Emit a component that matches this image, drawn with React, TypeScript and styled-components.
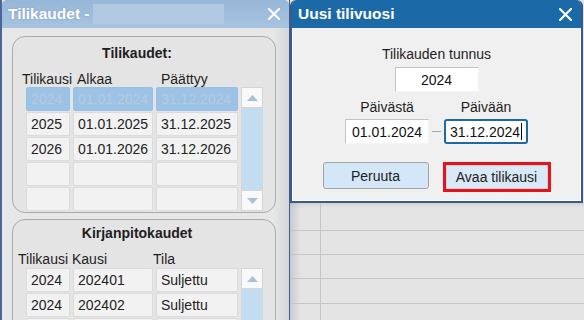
import styled, { createGlobalStyle } from 'styled-components';

const GlobalStyle = createGlobalStyle`
  html, body {
    margin: 0;
    padding: 0;
  }

  body {
    width: 584px;
    height: 320px;
    overflow: hidden;
    background: #e4e4e4;
    font-family: 'Liberation Sans', Arial, sans-serif;
    font-size: 14px;
    color: #1e1e1e;
  }
`;

const Desktop = styled.div`
  display: flex;
  width: 584px;
  height: 320px;
  overflow: hidden;
`;

const Window = styled.section`
  flex: none;
  width: 290px;
  display: flex;
  flex-direction: column;
  box-sizing: border-box;
  border-left: 2px solid #4a6696;
  border-right: 1px solid #3e5c8d;
  overflow: hidden;
`;

const TitleBar = styled.header<{ $active?: boolean }>`
  flex: none;
  height: 28px;
  display: flex;
  align-items: center;
  gap: 3px;
  padding: 0 9px 0 6px;
  box-sizing: border-box;
  border-radius: 5px 5px 0 0;
  background: ${({ $active }) => ($active ? '#1b6aa7' : 'linear-gradient(#97b7d8, #a7c3e0)')};
  color: #fff;
  font-size: 15.5px;
  font-weight: bold;
  text-shadow: ${({ $active }) => ($active ? 'none' : '0 0 2px rgba(90, 120, 160, .5)')};
`;

const Redacted = styled.span`
  width: 131px;
  height: 20px;
  background: #b1c9e2;
`;

const Close = styled.svg`
  margin-left: auto;
  flex: none;
`;

const WindowBody = styled.div`
  flex: 1;
  display: flex;
  flex-direction: column;
  gap: 6px;
  padding: 8px 0 0 10px;
  background: linear-gradient(to right, #e7e7e7 calc(100% - 16px), #d4d6da);
`;

const Panel = styled.div<{ $top: number }>`
  flex: none;
  width: 264px;
  box-sizing: border-box;
  padding: ${({ $top }) => $top}px 0 1px;
  border: 1px solid #a9a9a9;
  border-radius: 13px;
  background: #e4e4e4;
`;

const Heading = styled.div`
  padding-right: 14px;
  text-align: center;
  font-weight: bold;
  line-height: 16px;
`;

const HeaderRow = styled.div<{ $cols: string; $indent: number; $after: number }>`
  display: grid;
  grid-template-columns: ${({ $cols }) => $cols};
  padding-left: ${({ $indent }) => $indent}px;
  margin: 10px 0 ${({ $after }) => $after}px;
  line-height: 16px;
`;

const Table = styled.div<{ $rows: number }>`
  display: grid;
  grid-template-columns: 44px 80px 82px 22px;
  grid-template-rows: repeat(${({ $rows }) => $rows}, 24px);
  column-gap: 3px;
  row-gap: 1px;
  padding-left: 13px;
`;

const Cell = styled.div<{ $selected?: boolean }>`
  box-sizing: border-box;
  padding-left: 4px;
  line-height: 22px;
  white-space: nowrap;
  border: 1px solid ${({ $selected }) => ($selected ? '#98c0e2' : '#dcdcdc')};
  border-radius: 2px;
  background: ${({ $selected }) => ($selected ? '#9cc3e5' : '#f2f2f2')};
  color: ${({ $selected }) => ($selected ? '#b6cadd' : '#222')};
`;

const Scrollbar = styled.div`
  grid-column: 4;
  grid-row: 1 / -1;
  display: flex;
  flex-direction: column;
`;

const ScrollButton = styled.div`
  flex: none;
  height: 21px;
  display: flex;
  align-items: center;
  justify-content: center;
  box-sizing: border-box;
  border: 1px solid #d6d6d6;
  background: #f9f9f9;
`;

const Track = styled.div`
  flex: 1;
  border-left: 1px solid #cfd6dc;
  border-right: 1px solid #cfd6dc;
  background: #c4dcef;
`;

const RightSide = styled.div`
  flex: 1;
  display: flex;
  flex-direction: column;
`;

const Dialog = styled.section`
  flex: none;
  height: 203px;
  margin-right: 1px;
  display: flex;
  flex-direction: column;
  box-sizing: border-box;
  border: 2px solid #3a5a8c;
  border-top: 0;
  border-radius: 6px 6px 0 0;
  background: #f0f0f0;
`;

const DialogBody = styled.div`
  flex: 1;
  display: flex;
  flex-direction: column;
  align-items: center;
  padding-top: 18px;
  box-shadow: inset 1px 0 0 #fff, inset -1px -1px 0 #fff;
`;

const Label = styled.div`
  line-height: 16px;
  text-align: center;
`;

const Field = styled.div<{ $focused?: boolean }>`
  width: 84px;
  height: 25px;
  box-sizing: border-box;
  display: flex;
  align-items: center;
  justify-content: center;
  background: #fff;
  color: #111;
  border: ${({ $focused }) => ($focused ? '2px solid #1b69a6' : '1px solid')};
  border-color: ${({ $focused }) => ($focused ? '#1b69a6' : '#c4c4c4 #f4f4f4 #f4f4f4 #c4c4c4')};
  border-radius: ${({ $focused }) => ($focused ? '3px' : '0')};
`;

const Caret = styled.span`
  width: 1px;
  height: 17px;
  margin-left: 1px;
  background: #000;
`;

const YearField = styled(Field)`
  margin-top: 5px;
`;

const DateGrid = styled.div`
  margin-top: 7px;
  display: grid;
  grid-template-columns: 84px 15px 84px;
  grid-template-rows: 16px 25px;
  row-gap: 4px;
`;

const Dash = styled.span`
  grid-column: 2;
  grid-row: 2;
  align-self: center;
  justify-self: center;
  width: 9px;
  height: 1px;
  background: #a8a8a8;
`;

const Buttons = styled.div`
  margin-top: 18px;
  display: flex;
  align-items: flex-start;
  gap: 14px;
`;

const Button = styled.button<{ $highlight?: boolean }>`
  width: ${({ $highlight }) => ($highlight ? 108 : 106)}px;
  height: ${({ $highlight }) => ($highlight ? 30 : 27)}px;
  padding: 0;
  box-sizing: border-box;
  border: ${({ $highlight }) => ($highlight ? '3px solid #e5141c' : '1px solid #a2a2a2')};
  border-radius: ${({ $highlight }) => ($highlight ? '0' : '3px')};
  background: ${({ $highlight }) => ($highlight ? '#dae9f7' : '#d3e7f8')};
  box-shadow: ${({ $highlight }) => ($highlight ? 'inset 0 0 0 1px #c9cfd4' : 'none')};
  font-family: inherit;
  font-size: 14px;
  color: #222;
`;

const BackGrid = styled.div`
  flex: 1;
  background: linear-gradient(to right, #c7cbd2, #e4e4e4 11px);
  box-shadow: inset 0 5px 5px -4px rgba(0, 0, 0, .12);
`;

const GridRow = styled.div<{ $height: number }>`
  display: grid;
  grid-template-columns: 31px 1fr;
  height: ${({ $height }) => $height}px;
  box-sizing: border-box;
  border-bottom: 1px solid #c6c6c6;
`;

const GridCell = styled.div`
  border-right: 1px solid #c6c6c6;
`;

function CloseIcon({ size }: { size: number }) {
  return (
    <Close width={size} height={size} viewBox="0 0 13 13">
      <path d="M1 1 L12 12 M12 1 L1 12" stroke="#fff" strokeWidth="2.2" strokeLinecap="square" />
    </Close>
  );
}

function Arrow({ down }: { down?: boolean }) {
  return (
    <svg width="11" height="6" viewBox="0 0 11 6">
      <polygon points={down ? '0,0 11,0 5.5,6' : '0,6 11,6 5.5,0'} fill="#a9c0d9" />
    </svg>
  );
}

type Row = [string, string, string];

function DataTable({ rows, selected }: { rows: Row[]; selected?: number }) {
  return (
    <Table $rows={rows.length}>
      {rows.map((row, i) =>
        row.map((value, c) => (
          <Cell key={`${i}-${c}`} $selected={i === selected} style={{ gridRow: i + 1, gridColumn: c + 1 }}>
            {value}
          </Cell>
        ))
      )}
      <Scrollbar>
        <ScrollButton><Arrow /></ScrollButton>
        <Track />
        <ScrollButton><Arrow down /></ScrollButton>
      </Scrollbar>
    </Table>
  );
}

const periods: Row[] = [
  ['2024', '01.01.2024', '31.12.2024'],
  ['2025', '01.01.2025', '31.12.2025'],
  ['2026', '01.01.2026', '31.12.2026'],
  ['', '', ''],
  ['', '', ''],
];

const accounting: Row[] = [
  ['2024', '202401', 'Suljettu'],
  ['2024', '202402', 'Suljettu'],
  ['', '', ''],
];

const gridRows = [28, 24, 24, 25, 24];

export default function App() {
  return (
    <>
      <GlobalStyle />
      <Desktop>
        <Window>
          <TitleBar>
            Tilikaudet -
            <Redacted />
            <CloseIcon size={12} />
          </TitleBar>
          <WindowBody>
            <Panel $top={8}>
              <Heading>Tilikaudet:</Heading>
              <HeaderRow $cols="55px 84px auto" $indent={9} $after={0}>
                <span>Tilikausi</span>
                <span>Alkaa</span>
                <span>Päättyy</span>
              </HeaderRow>
              <DataTable rows={periods} selected={0} />
            </Panel>
            <Panel $top={5}>
              <Heading>Kirjanpitokaudet</Heading>
              <HeaderRow $cols="54px 81px auto" $indent={5} $after={1}>
                <span>Tilikausi</span>
                <span>Kausi</span>
                <span>Tila</span>
              </HeaderRow>
              <DataTable rows={accounting} />
            </Panel>
          </WindowBody>
        </Window>
        <RightSide>
          <Dialog>
            <TitleBar $active>
              Uusi tilivuosi
              <CloseIcon size={13} />
            </TitleBar>
            <DialogBody>
              <Label>Tilikauden tunnus</Label>
              <YearField>2024</YearField>
              <DateGrid>
                <Label>Päivästä</Label>
                <span />
                <Label>Päivään</Label>
                <Field>01.01.2024</Field>
                <Dash />
                <Field $focused>31.12.2024<Caret /></Field>
              </DateGrid>
              <Buttons>
                <Button>Peruuta</Button>
                <Button $highlight>Avaa tilikausi</Button>
              </Buttons>
            </DialogBody>
          </Dialog>
          <BackGrid>
            {gridRows.map((h, i) => (
              <GridRow key={i} $height={h}>
                <GridCell />
                <div />
              </GridRow>
            ))}
          </BackGrid>
        </RightSide>
      </Desktop>
    </>
  );
}
